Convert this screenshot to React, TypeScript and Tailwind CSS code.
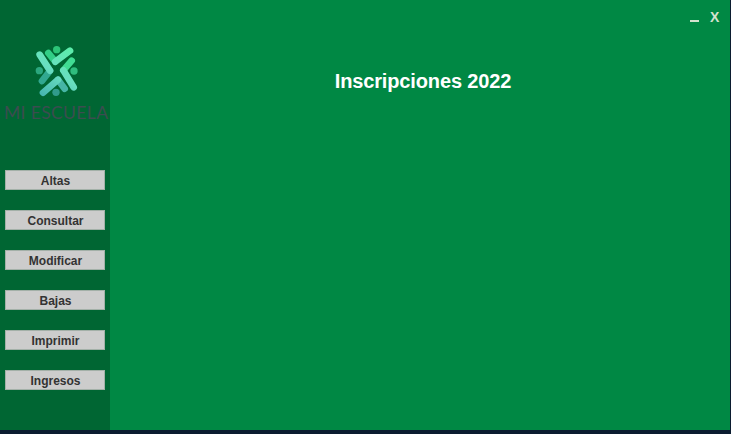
const actions = ["Altas", "Consultar", "Modificar", "Bajas", "Imprimir", "Ingresos"];

function Logo() {
  return (
    <svg width="44" height="54" viewBox="102 30 132 162" fill="none" aria-hidden="true">
      <defs>
        <linearGradient id="mint" x1="215" y1="45" x2="125" y2="180" gradientUnits="userSpaceOnUse">
          <stop offset="0" stopColor="#5cecab" />
          <stop offset="0.5" stopColor="#69dfc0" />
          <stop offset="1" stopColor="#46b5b0" />
        </linearGradient>
      </defs>
      <g strokeWidth="20" strokeLinecap="round" strokeLinejoin="round">
        <path d="M145 54L166 80" stroke="#32ce86" />
        <path d="M150 107L126 138" stroke="#31a890" />
        <path d="M174 134L194 161" stroke="#46b5a6" />
        <path d="M215 77L190 106" stroke="#40dc93" />
      </g>
      <g stroke="url(#mint)" strokeWidth="20" strokeLinecap="round" strokeLinejoin="round">
        <path d="M166 80L210 47" />
        <path d="M119 59L150 107" />
        <path d="M190 106L221 157" />
        <path d="M129 173L174 134" />
      </g>
      <circle cx="170" cy="44" r="11" fill="#2cc477" />
      <circle cx="118" cy="107" r="11" fill="#2ba77e" />
      <circle cx="222" cy="108" r="11" fill="#2fbd7e" />
      <circle cx="168" cy="172" r="11" fill="#319b8c" />
    </svg>
  );
}

export default function App() {
  return (
    <div className="flex h-[434px] w-[731px] flex-col overflow-hidden bg-[#0b1c30] font-['Liberation_Sans',Arial,sans-serif]">
      <div className="flex h-[430px] w-[730px]">
        <aside className="flex w-[110px] shrink-0 flex-col bg-[#006633]">
          <div className="flex h-[170px] flex-col items-center pt-[45px] pl-[2px]">
            <Logo />
            <svg width="106" height="24" className="shrink-0" aria-label="MI ESCUELA">
              <text x="1" y="20" textLength="104" lengthAdjust="spacing" fontSize="17.5" fill="#3b4d50" className="font-['Lato',sans-serif]">
                MI ESCUELA
              </text>
            </svg>
          </div>
          <nav className="flex flex-col gap-5 px-[5px]">
            {actions.map((label) => (
              <button
                key={label}
                className="flex h-5 items-center justify-center border border-[#a3b0a8] bg-[#cccccc] pt-px pl-px text-[12px] leading-none font-bold text-[#333333]"
              >
                {label}
              </button>
            ))}
          </nav>
        </aside>
        <main className="flex flex-1 flex-col bg-[#008844]">
          <div className="flex h-[68px] items-start justify-end gap-[11px] pt-[10px] pr-[11px] text-[#d3e2ce]">
            <button aria-label="Minimizar" className="mt-[10px] h-[2px] w-[9px] bg-[#d3e2ce]" />
            <button aria-label="Cerrar" className="w-[9px] text-[14px] leading-[14px] font-bold">
              X
            </button>
          </div>
          <h1 className="pl-[6px] text-center text-[20px] leading-[26px] font-bold tracking-[-0.14px] text-white">Inscripciones 2022</h1>
        </main>
      </div>
    </div>
  );
}
